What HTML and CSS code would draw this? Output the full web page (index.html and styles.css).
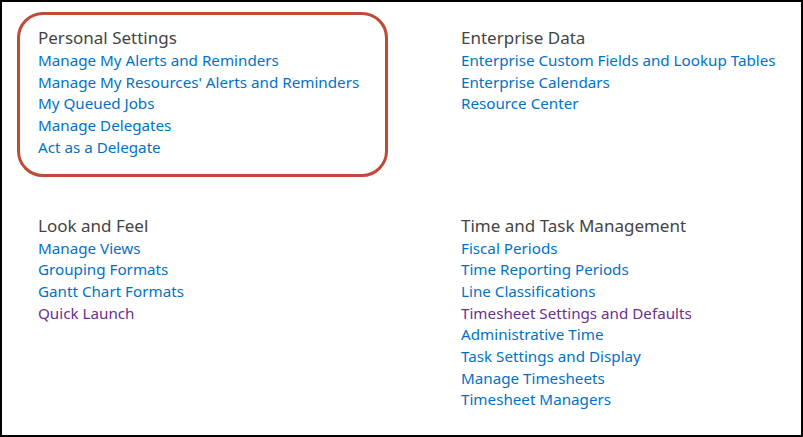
FILE: index.html
```html
<!DOCTYPE html>
<html lang="en">
<head>
    <meta charset="UTF-8">
    <title>Server Settings</title>
    <link rel="stylesheet" href="styles.css">
</head>
<body>
    <div class="frame">
        <div class="settings-grid">
            <div class="section highlight">
                <h2>Personal Settings</h2>
                <a href="#">Manage My Alerts and Reminders</a>
                <a href="#">Manage My Resources' Alerts and Reminders</a>
                <a href="#">My Queued Jobs</a>
                <a href="#">Manage Delegates</a>
                <a href="#">Act as a Delegate</a>
            </div>

            <div class="section">
                <h2>Enterprise Data</h2>
                <a href="#">Enterprise Custom Fields and Lookup Tables</a>
                <a href="#">Enterprise Calendars</a>
                <a href="#">Resource Center</a>
            </div>

            <div class="section">
                <h2>Look and Feel</h2>
                <a href="#">Manage Views</a>
                <a href="#">Grouping Formats</a>
                <a href="#">Gantt Chart Formats</a>
                <a href="#" class="visited">Quick Launch</a>
            </div>

            <div class="section">
                <h2>Time and Task Management</h2>
                <a href="#">Fiscal Periods</a>
                <a href="#">Time Reporting Periods</a>
                <a href="#">Line Classifications</a>
                <a href="#" class="visited">Timesheet Settings and Defaults</a>
                <a href="#">Administrative Time</a>
                <a href="#">Task Settings and Display</a>
                <a href="#">Manage Timesheets</a>
                <a href="#">Timesheet Managers</a>
            </div>
        </div>
    </div>
</body>
</html>
```

FILE: styles.css
```css
body {
    margin: 0;
    background: #fff;
    font-family: 'Noto Sans', 'Open Sans', sans-serif;
}

.frame {
    width: 803px;
    height: 437px;
    box-sizing: border-box;
    border: 2px solid #000;
    padding: 10px 0 0 15px;
}

.settings-grid {
    display: grid;
    grid-template-columns: 371px 1fr;
    column-gap: 52px;
    row-gap: 23px;
    align-items: start;
}

.section {
    display: flex;
    flex-direction: column;
    align-items: flex-start;
    border: 3px solid transparent;
    border-radius: 26px;
    padding: 11px 18px 15px;
}

.section.highlight {
    border-color: #bf4a36;
}

h2 {
    margin: 0;
    font-size: 17px;
    font-weight: normal;
    line-height: 24px;
    color: #444;
}

a {
    font-size: 15.2px;
    line-height: 21.7px;
    color: #0072c6;
    text-decoration: none;
}

a.visited {
    color: #6b2e91;
}
```
